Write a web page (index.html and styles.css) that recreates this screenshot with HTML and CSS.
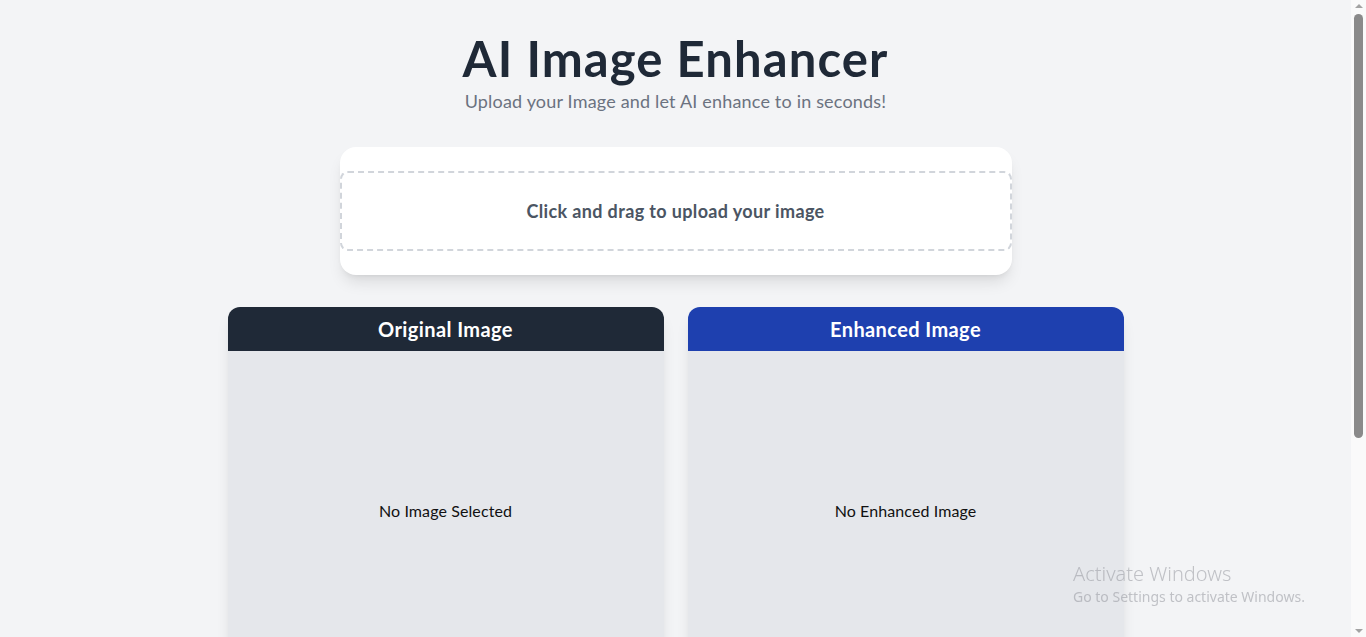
FILE: index.html
```html
<!DOCTYPE html>
<html lang="en">
<head>
<meta charset="utf-8">
<title>AI Image Enhancer</title>
<link rel="stylesheet" href="styles.css">
</head>
<body>
<main class="page">
  <header class="hero">
    <h1 class="title">AI Image Enhancer</h1>
    <p class="subtitle">Upload your Image and let AI enhance to in seconds!</p>
  </header>

  <section class="upload-card">
    <label class="dropzone">
      <span class="dropzone-text">Click and drag to upload your image</span>
    </label>
  </section>

  <section class="previews">
    <div class="preview">
      <div class="preview-head head-dark">Original Image</div>
      <div class="preview-body">No Image Selected</div>
    </div>
    <div class="preview">
      <div class="preview-head head-blue">Enhanced Image</div>
      <div class="preview-body">No Enhanced Image</div>
    </div>
  </section>
</main>

<div class="scrollbar" aria-hidden="true">
  <span class="sb-arrow sb-up"></span>
  <span class="sb-thumb"></span>
  <span class="sb-arrow sb-down"></span>
</div>

<div class="activate">
  <div class="activate-title">Activate Windows</div>
  <div class="activate-sub">Go to Settings to activate Windows.</div>
</div>
</body>
</html>
```

FILE: styles.css
```css
html, body {
  margin: 0;
  padding: 0;
}

body {
  background: #f3f4f6;
  font-family: "Lato", "Noto Sans", "Liberation Sans", sans-serif;
  color: #111827;
  padding-right: 15px;
}

.page {
  display: flex;
  flex-direction: column;
  align-items: center;
  padding: 34px 16px 244px;
}

.hero {
  display: flex;
  flex-direction: column;
  align-items: center;
}

.title {
  margin: 0;
  font-size: 49px;
  line-height: 48px;
  font-weight: 700;
  letter-spacing: 1.1px;
  color: #1f2937;
}

.subtitle {
  margin: 5px 0 0;
  font-size: 18px;
  line-height: 28px;
  letter-spacing: 0.18px;
  color: #6b7280;
}

.upload-card {
  margin-top: 32px;
  width: 672px;
  background: #ffffff;
  border-radius: 16px;
  padding: 24px 0;
  box-shadow: 0 10px 15px -3px rgba(0,0,0,0.1), 0 4px 6px -4px rgba(0,0,0,0.1);
}

.dropzone {
  display: flex;
  align-items: center;
  justify-content: center;
  height: 76px;
  border: 2px dashed #d1d5db;
  border-radius: 8px;
  cursor: pointer;
}

.dropzone-text {
  font-size: 18px;
  line-height: 28px;
  font-weight: 700;
  letter-spacing: 0.37px;
  color: #4b5563;
}

.previews {
  margin-top: 32px;
  display: grid;
  grid-template-columns: 436px 436px;
  gap: 24px;
}

.preview {
  border-radius: 12px;
  overflow: hidden;
  box-shadow: 0 10px 15px -3px rgba(0,0,0,0.1), 0 4px 6px -4px rgba(0,0,0,0.1);
}

.preview-head {
  height: 44px;
  display: flex;
  align-items: center;
  justify-content: center;
  font-size: 20px;
  font-weight: 700;
  letter-spacing: 0.4px;
  color: #ffffff;
}

.head-dark { background: #1f2937; }
.head-blue { background: #1e40af; }

.preview-body {
  height: 320px;
  display: flex;
  align-items: center;
  justify-content: center;
  background: #e5e7eb;
  font-size: 16px;
  line-height: 22px;
  letter-spacing: 0.1px;
  color: #111111;
}

/* simulated browser scrollbar overlay */
.scrollbar {
  position: fixed;
  top: 0;
  right: 0;
  width: 15px;
  height: 100%;
  background: #fafafa;
  display: flex;
  flex-direction: column;
  align-items: center;
}

.sb-arrow {
  width: 0;
  height: 0;
  border-left: 4px solid transparent;
  border-right: 4px solid transparent;
}

.sb-up {
  margin-top: 4px;
  border-bottom: 4px solid #a3a3a3;
}

.sb-thumb {
  margin-top: 6px;
  width: 9px;
  height: 424px;
  border-radius: 5px;
  background: #8a8a8a;
}

.sb-down {
  margin-top: auto;
  margin-bottom: 4px;
  border-top: 4px solid #a3a3a3;
}

.activate {
  position: fixed;
  left: 1073px;
  top: 562px;
  color: rgba(150, 152, 158, 0.55);
  font-family: "Noto Sans", "Open Sans", sans-serif;
  pointer-events: none;
}

.activate-title {
  font-size: 20px;
  line-height: 24px;
  font-weight: 300;
}

.activate-sub {
  font-size: 14px;
  line-height: 20px;
  margin-top: 1px;
}
```
